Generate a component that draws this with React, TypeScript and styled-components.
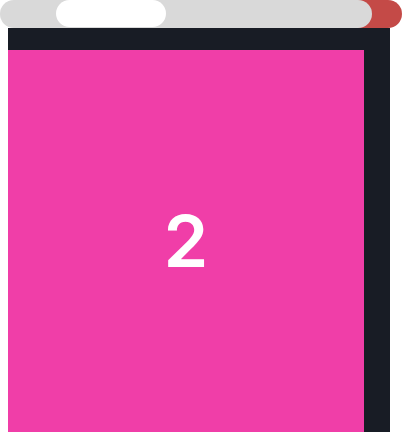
import React from "react";
import styled, { createGlobalStyle } from "styled-components";

const Global = createGlobalStyle`
  html, body { margin: 0; padding: 0; background: #ffffff; overflow: hidden; }
  body { font-family: Inter, "Liberation Sans", sans-serif; }
`;

const Page = styled.div`
  width: 402px;
  height: 432px;
  display: flex;
  flex-direction: column;
  overflow: hidden;
`;

const TopBar = styled.div`
  display: flex;
  height: 28px;
  flex-shrink: 0;
`;

const Track = styled.div`
  position: relative;
  z-index: 2;
  width: 372px;
  height: 28px;
  border-radius: 14px;
  background: #d9d9d9;
  display: flex;
  align-items: flex-start;
`;

const Thumb = styled.div`
  margin-left: 56px;
  width: 110px;
  height: 27px;
  border-radius: 13.5px;
  background: #ffffff;
`;

const EndCap = styled.div`
  position: relative;
  z-index: 1;
  margin-left: -28px;
  width: 58px;
  height: 28px;
  border-radius: 0 14px 14px 0;
  background: #c44a47;
`;

const Stage = styled.div`
  flex: 1;
  padding-left: 8px;
  display: flex;
`;

const Frame = styled.div`
  width: 382px;
  padding-top: 22px;
  background: #181c25;
  display: flex;
`;

const Slide = styled.div<{ $color: string }>`
  width: 356px;
  background: ${(p) => p.$color};
  display: flex;
  align-items: center;
  justify-content: center;
`;

const Num = styled.span`
  color: #ffffff;
  font-family: Inter, "Liberation Sans", sans-serif;
  font-weight: 600;
  font-size: 72px;
  line-height: 1;
  margin-top: 0px;
`;

export default function App() {
  return (
    <Page>
      <Global />
      <TopBar>
        <Track>
          <Thumb />
        </Track>
        <EndCap />
      </TopBar>
      <Stage>
        <Frame>
          <Slide $color="#f03ea8">
            <Num>2</Num>
          </Slide>
        </Frame>
      </Stage>
    </Page>
  );
}
